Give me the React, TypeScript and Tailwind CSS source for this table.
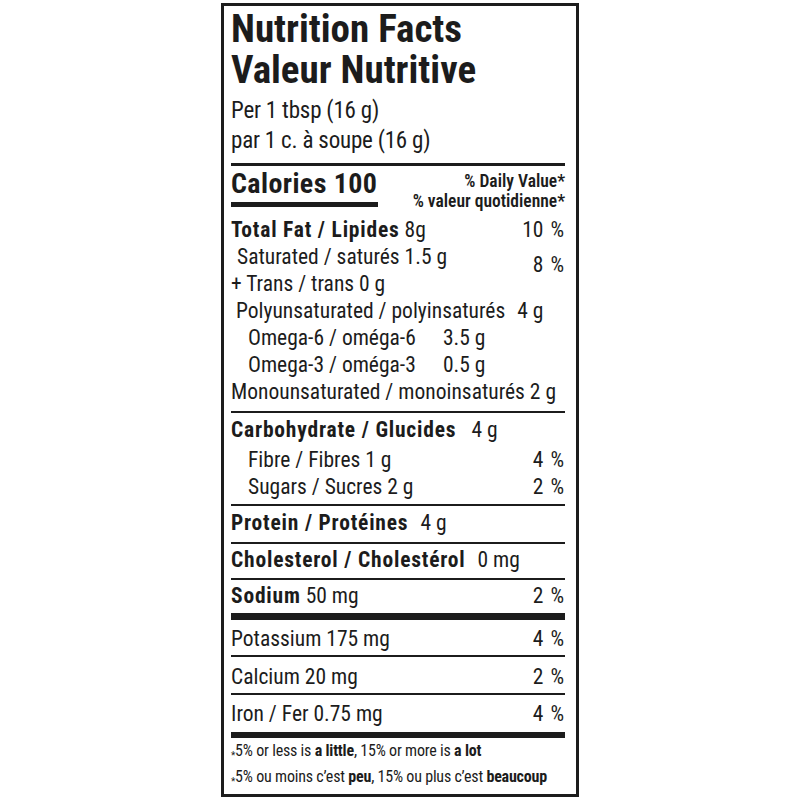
const ink = "bg-[#1c1c1c]"

function Thin() {
  return <div className={`h-[2px] ${ink}`} />
}

function B({ children }: { children: React.ReactNode }) {
  return <b className="tracking-[0.8px]">{children}</b>
}

function Star() {
  return <span className="relative top-[3px] text-[10px]">*</span>
}

function Row({
  left,
  right,
  className = "",
}: {
  left: React.ReactNode
  right?: React.ReactNode
  className?: string
}) {
  return (
    <div className={`flex items-baseline justify-between ${className}`}>
      <div>{left}</div>
      {right ? <div className="pr-[1px] [word-spacing:2px]">{right}</div> : null}
    </div>
  )
}

export default function App() {
  return (
    <div className="min-h-screen bg-white pt-[3px]">
      <div className="mx-auto w-[358px] border-[3px] border-[#1c1c1c] pb-[3px] pl-[7px] pr-[11px] font-['Roboto',sans-serif] font-stretch-condensed text-[#1c1c1c]">
        <div className="pt-[3px] text-[39px] font-bold leading-[41px]">
          <div>Nutrition Facts</div>
          <div>Valeur Nutritive</div>
        </div>
        <div className="mt-[5px] text-[23px] leading-[30px] tracking-[-0.2px]">
          <div>Per 1 tbsp (16 g)</div>
          <div>par 1 c. à soupe (16 g)</div>
        </div>
        <div className={`mt-[7px] h-[3px] ${ink}`} />

        <div className="flex justify-between">
          <div className="pt-[3px]">
            <div className="text-[28px] font-bold leading-[30px] tracking-[0.4px]">Calories 100</div>
            <div className={`mt-[3px] h-[5px] w-[147px] ${ink}`} />
          </div>
          <div className="pt-[5px] text-right text-[17.5px] font-semibold leading-[20px]">
            <div>% Daily Value*</div>
            <div>% valeur quotidienne*</div>
          </div>
        </div>

        <div className="mt-[5px] text-[21.5px] leading-[27px]">
          <Row
            left={
              <>
                <B>Total Fat / Lipides</B> 8g
              </>
            }
            right="10 %"
          />
          <div className="flex justify-between">
            <div>
              <div className="pl-[6px]">Saturated / saturés 1.5 g</div>
              <div>+ Trans / trans 0 g</div>
            </div>
            <div className="pr-[1px] pt-[8px] [word-spacing:2px]">8 %</div>
          </div>
          <div className="pl-[5px]">
            Polyunsaturated / polyinsaturés<span className="ml-[12px]">4 g</span>
          </div>
          <div className="pl-[17px]">
            <span className="inline-block w-[195px]">Omega-6 / oméga-6</span>3.5 g
          </div>
          <div className="pl-[17px]">
            <span className="inline-block w-[195px]">Omega-3 / oméga-3</span>0.5 g
          </div>
          <div>Monounsaturated / monoinsaturés 2 g</div>
        </div>
        <div className="mt-[6px]">
          <Thin />
        </div>

        <div className="pt-[3px] text-[21.5px] leading-[27px]">
          <div className="mb-[3px]">
            <B>Carbohydrate / Glucides</B>
            <span className="ml-[15px]">4 g</span>
          </div>
          <Row className="pl-[17px]" left="Fibre / Fibres 1 g" right="4 %" />
          <Row className="pl-[17px]" left="Sugars / Sucres 2 g" right="2 %" />
        </div>
        <div className="mt-[4px]">
          <Thin />
        </div>

        <div className="pb-[6px] pt-[4px] text-[21.5px] leading-[26px]">
          <B>Protein / Protéines</B>
          <span className="ml-[12px]">4 g</span>
        </div>
        <Thin />
        <div className="pb-[5px] pt-[3px] text-[21.5px] leading-[26px]">
          <B>Cholesterol / Cholestérol</B>
          <span className="ml-[12px]">0 mg</span>
        </div>
        <Thin />
        <div className="pb-[4px] pt-[3px] text-[21.5px] leading-[26px]">
          <Row
            left={
              <>
                <B>Sodium</B> 50 mg
              </>
            }
            right="2 %"
          />
        </div>
        <div className={`h-[7px] ${ink}`} />

        <div className="text-[21.5px] leading-[26px]">
          <Row className="pb-[3px] pt-[6px]" left="Potassium 175 mg" right="4 %" />
          <Thin />
          <Row className="pb-[3px] pt-[7px]" left="Calcium 20 mg" right="2 %" />
          <Thin />
          <Row className="pb-[5px] pt-[6px]" left="Iron / Fer 0.75 mg" right="4 %" />
        </div>
        <div className={`h-[6px] ${ink}`} />

        <div className="pt-[1px] text-[16px] leading-[24px] tracking-[-0.2px]">
          <div>
            <Star />5% or less is <b>a little</b>, 15% or more is <b>a lot</b>
          </div>
          <div>
            <Star />5% ou moins c’est <b>peu</b>, 15% ou plus c’est <b>beaucoup</b>
          </div>
        </div>
      </div>
    </div>
  )
}
